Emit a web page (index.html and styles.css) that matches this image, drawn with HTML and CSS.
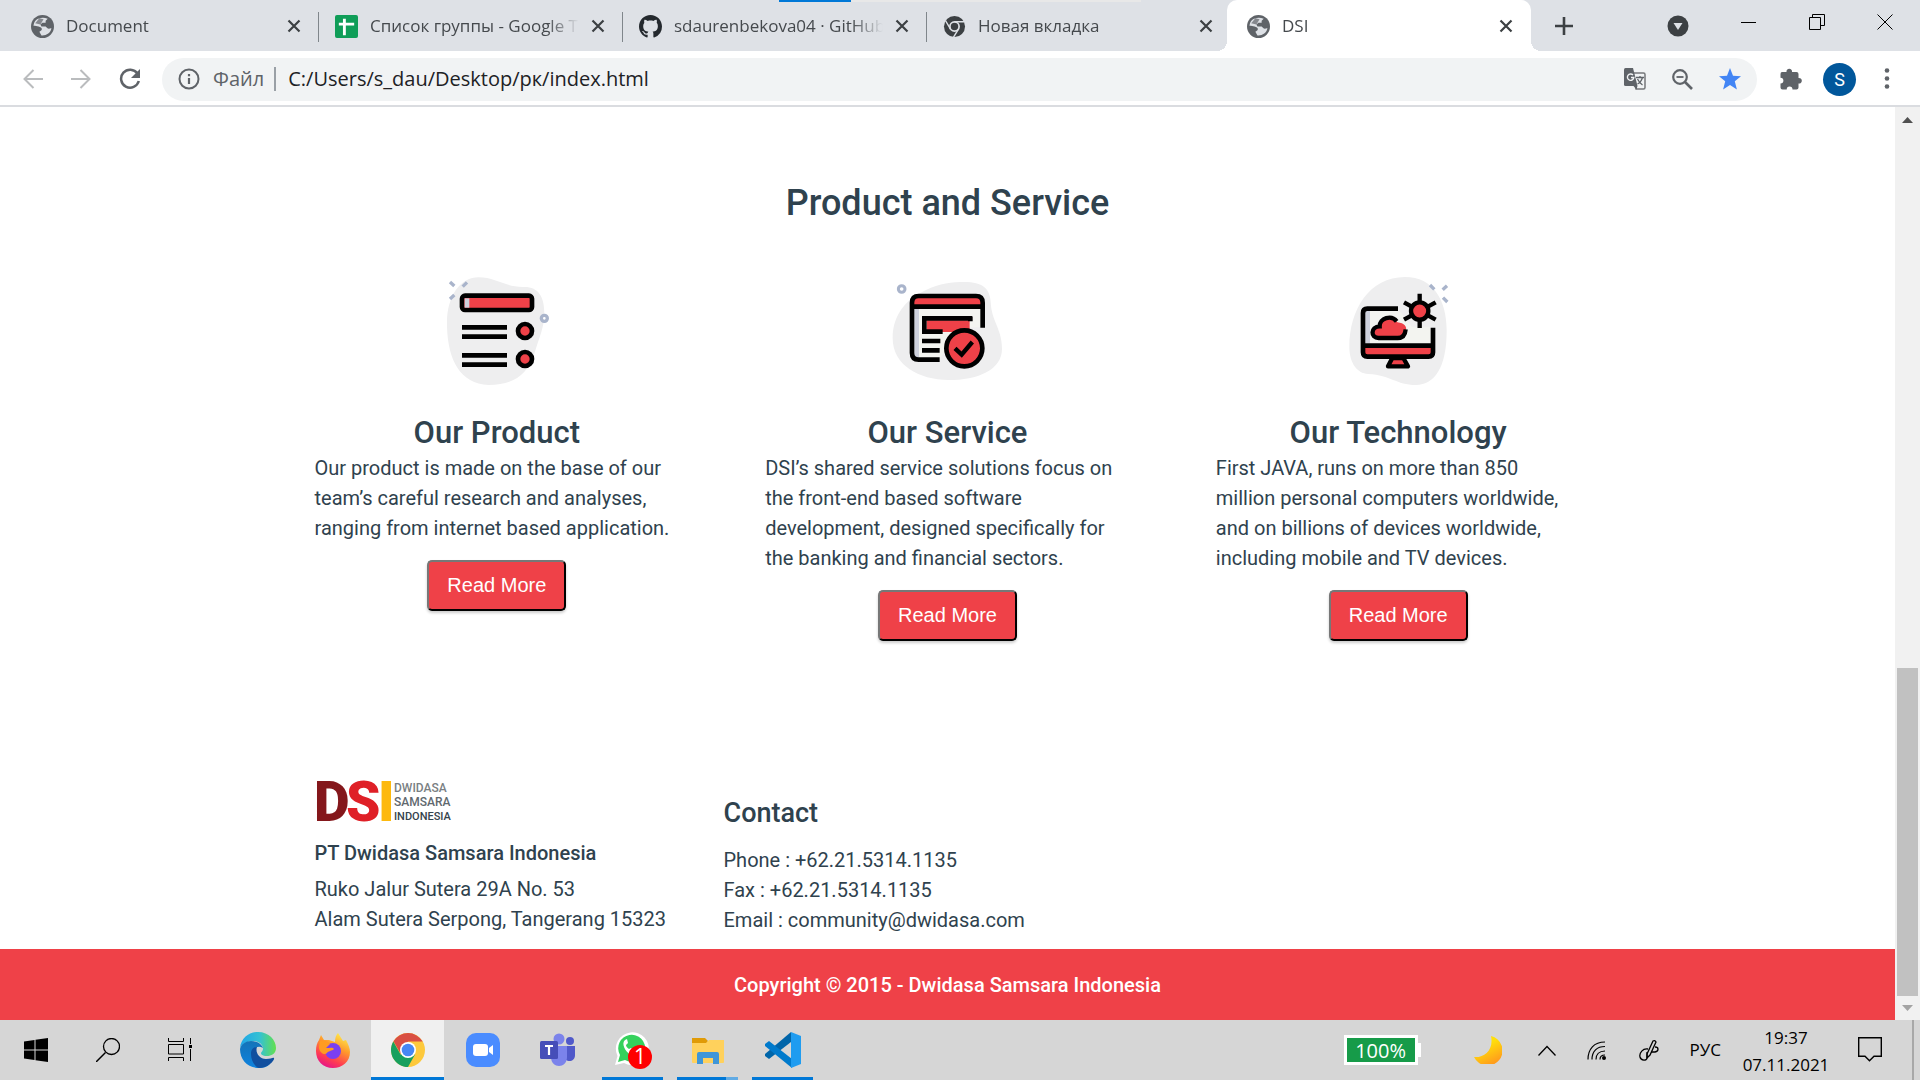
FILE: index.html
```html
<!DOCTYPE html>
<html lang="en">
<head>
<meta charset="utf-8">
<title>DSI</title>
<link rel="stylesheet" href="styles.css">
</head>
<body>
<svg class="defs" aria-hidden="true">
  <symbol id="globe" viewBox="0 0 22 22"><circle cx="11" cy="11" r="11" fill="#5f6368"/><path d="M2.500 10.500c2-.5 4 .5 6 1 1.500.5 2.500 2 1.500 3l-2 1.500 2 3.500c4 .5 9-2 9.500-7-1.500.5-3 1-4 0l-1.500-1.500h-4l-1-2 2-1.500h3V5.500l2-2C8 1 2.500 5 2.500 10.500z" fill="#dee1e6"/><path d="M4 8l5 1 3-5-4-1z" fill="#5f6368" opacity=".7"/></symbol>
  <symbol id="close" viewBox="0 0 14 14"><path d="M1.500 1.500l11 11M12.500 1.500l-11 11" stroke="#3c4043" stroke-width="2.200" fill="none"/></symbol>
</svg>

<header class="browser">
  <div class="progress" aria-hidden="true"></div>
  <div class="tabstrip">
    <div class="tab"><svg class="fav"><use href="#globe"/></svg><span class="tab-title">Document</span><button class="tab-close" aria-label="Close"><svg><use href="#close"/></svg></button></div>
    <div class="tab"><svg class="fav" viewBox="0 0 24 24"><rect width="24" height="24" rx="2" fill="#0f9d58"/><path d="M4 9.500h16M9.800 4v17" stroke="#fff" stroke-width="3"/></svg><span class="tab-title">Список группы - Google Т</span><button class="tab-close" aria-label="Close"><svg><use href="#close"/></svg></button></div>
    <div class="tab"><svg class="fav" viewBox="0 0 16 16"><path fill="#24292e" d="M8 0C3.580 0 0 3.580 0 8c0 3.540 2.290 6.530 5.470 7.590.4.070.55-.17.55-.38 0-.19-.01-.82-.01-1.490-2.010.37-2.530-.49-2.690-.94-.09-.23-.48-.94-.82-1.130-.28-.15-.68-.52-.01-.53.63-.01 1.080.58 1.230.82.72 1.210 1.870.87 2.330.66.070-.52.280-.87.510-1.070-1.780-.2-3.640-.89-3.640-3.950 0-.87.310-1.590.82-2.150-.08-.2-.36-1.020.08-2.120 0 0 .67-.21 2.200.82.64-.18 1.320-.27 2-.27s1.360.09 2 .27c1.530-1.040 2.200-.82 2.200-.82.44 1.100.16 1.920.08 2.120.51.560.82 1.270.82 2.150 0 3.070-1.870 3.750-3.650 3.950.29.250.54.730.54 1.480 0 1.070-.01 1.930-.01 2.200 0 .21.150.46.550.38A8.010 8.010 0 0 0 16 8c0-4.420-3.580-8-8-8z"/></svg><span class="tab-title">sdaurenbekova04 · GitHub</span><button class="tab-close" aria-label="Close"><svg><use href="#close"/></svg></button></div>
    <div class="tab last"><svg class="fav" viewBox="0 0 24 24"><circle cx="12" cy="12" r="11" fill="#3c4043"/><circle cx="12" cy="12" r="4.800" fill="none" stroke="#dee1e6" stroke-width="1.800"/><path d="M12 7h10M7.700 14.500L2.700 6M16.300 14.500L11 23" stroke="#dee1e6" stroke-width="1.500"/></svg><span class="tab-title">Новая вкладка</span><button class="tab-close" aria-label="Close"><svg><use href="#close"/></svg></button></div>
    <div class="tab active"><svg class="fav"><use href="#globe"/></svg><span class="tab-title">DSI</span><button class="tab-close" aria-label="Close"><svg><use href="#close"/></svg></button></div>
    <button class="new-tab" aria-label="New tab"><svg width="18" height="18" viewBox="0 0 18 18"><path d="M9 0v18M0 9h18" stroke="#3c4043" stroke-width="2.600"/></svg></button>
    <div class="window-controls">
      <button aria-label="Search tabs"><svg width="22" height="22" viewBox="0 0 22 22"><circle cx="11" cy="11" r="10.500" fill="#3c4043"/><path d="M6.500 8h9L11 15z" fill="#dee1e6"/></svg></button>
      <button class="raised" aria-label="Minimize"><svg width="16" height="16" viewBox="0 0 16 16"><path d="M0 8.500h15" stroke="#000"/></svg></button>
      <button class="raised" aria-label="Restore"><svg width="16" height="16" viewBox="0 0 16 16"><path d="M.5 3.500h11v12H.5zM3.500 3V.5h12v11H12" fill="none" stroke="#000"/></svg></button>
      <button class="raised" aria-label="Close window"><svg width="16" height="16" viewBox="0 0 16 16"><path d="M.5.5l15 15M15.500.5l-15 15" stroke="#000"/></svg></button>
    </div>
  </div>
  <div class="toolbar">
    <div class="nav">
      <button aria-label="Back"><svg width="20" height="20" viewBox="0 0 20 20"><path d="M20 10H2M10.500 1L1.500 10l9 9" fill="none" stroke="#babcbe" stroke-width="2"/></svg></button>
      <button aria-label="Forward"><svg width="20" height="20" viewBox="0 0 20 20"><path d="M0 10h18M9.500 1l9 9-9 9" fill="none" stroke="#babcbe" stroke-width="2"/></svg></button>
      <button aria-label="Reload"><svg width="22" height="22" viewBox="0 0 22 22"><path d="M18.500 5.500A9 9 0 1 0 19.800 13" fill="none" stroke="#5f6368" stroke-width="2.500"/><path d="M21 1v9h-9z" fill="#5f6368"/></svg></button>
    </div>
    <div class="omnibox">
      <svg width="22" height="22" viewBox="0 0 22 22"><circle cx="11" cy="11" r="9.500" fill="none" stroke="#5f6368" stroke-width="2"/><path d="M11 10v6M11 6v2.200" stroke="#5f6368" stroke-width="2.200"/></svg>
      <label class="scheme" for="address">Файл</label>
      <input id="address" class="address" type="text" value="C:/Users/s_dau/Desktop/рк/index.html">
      <button aria-label="Translate"><svg width="22" height="22" viewBox="0 0 22 22"><path d="M9 5h10.500q1.500 0 1.500 1.500v13q0 1.500-1.500 1.500H12z" fill="#f1f3f4" stroke="#757779" stroke-width="1.500"/><path d="M1.500 0H9l4.500 18h-12Q0 18 0 16.500v-15Q0 0 1.500 0z" fill="#5f6368"/><path d="M9 7a3.200 3.200 0 1 0 .8 2.500H7" fill="none" stroke="#f1f3f4" stroke-width="1.400"/><path d="M12 9.500h8M16 8v1.500M18.500 9.500q-1.500 5-5 6.500M13.500 11q2 4 5 6" fill="none" stroke="#5f6368" stroke-width="1.300"/><path d="M9.500 18l3 3.500 1-3.500z" fill="#5f6368"/></svg></button>
      <button aria-label="Zoom"><svg width="21" height="21" viewBox="0 0 21 21"><circle cx="8" cy="8" r="6.800" fill="none" stroke="#5f6368" stroke-width="2.200"/><path d="M13 13l7 7" stroke="#5f6368" stroke-width="2.600"/><path d="M4.500 8h7" stroke="#5f6368" stroke-width="1.800"/></svg></button>
      <button aria-label="Bookmark"><svg width="22" height="22" viewBox="0 0 22 22"><path d="M11 0l3 7.700 8 .5-6.200 5 2.100 8.300L11 17l-6.900 4.500 2.100-8.300L0 8.200l8-.5z" fill="#4285f4"/></svg></button>
    </div>
    <div class="tools">
      <button aria-label="Extensions"><svg width="22" height="22" viewBox="0 0 22 22"><path d="M2 4h4.500a2.800 2.800 0 1 1 5.500 0h4.500q2 0 2 2v4a2.800 2.800 0 1 1 0 5.500v4q0 2-2 2h-4a2.900 2.900 0 0 0-5.800 0H2.500q-2 0-2-2v-4a2.900 2.900 0 0 0 0-5.800V6q0-2 1.500-2z" fill="#5f6368"/></svg></button>
      <button class="avatar">S</button>
      <button aria-label="Menu"><svg width="6" height="22" viewBox="0 0 6 22"><g fill="#5f6368"><circle cx="3" cy="2.500" r="2.300"/><circle cx="3" cy="10.500" r="2.300"/><circle cx="3" cy="18.500" r="2.300"/></g></svg></button>
    </div>
  </div>
</header>

<div class="viewport">
  <div class="page">
    <main class="container">
      <h2>Product and Service</h2>
      <div class="cards">
        <article class="card">
          <svg class="art" viewBox="51 30 360 360" role="img" aria-label="Product">
            <path d="M81 200C78 110 120 52 176 52c50 0 80 30 135 29 45-1 62 30 62 80 0 40-15 70-30 120-20 60-60 94-137 94C120 370 84 300 81 200z" fill="#eeeeef"/>
            <g stroke="#a9b4cb" stroke-width="10"><path d="M90 66l13 12M141 67l-13 13M103 105l-13 12"/><circle cx="373" cy="175" r="9" fill="#fff"/></g>
            <rect x="126" y="107" width="210" height="43" rx="9" fill="#ef4148" stroke="#000" stroke-width="14"/><path d="M134 115h14v28h-14z" fill="#cdd0dc"/>
            <path d="M126 202h135M126 230h135M126 286h135M126 314h135" stroke="#000" stroke-width="14"/>
            <g fill="#ef4148" stroke="#000" stroke-width="14"><circle cx="315" cy="213" r="21"/><circle cx="315" cy="297" r="21"/></g>
          </svg>
          <h3>Our Product</h3>
          <p>Our product is made on the base of our team’s careful research and analyses, ranging from internet based application.</p>
          <button class="more">Read More</button>
        </article>
        <article class="card">
          <svg class="art" viewBox="52 30 360 360" role="img" aria-label="Service">
            <path d="M69 235c0-75 45-120 100-145 40-20 80-24 115-24 55 0 77 20 79 60 3 60 34 80 34 140 0 65-75 94-160 94-90 0-168-45-168-125z" fill="#eeeeef"/>
            <circle cx="96" cy="87" r="10" fill="#fff" stroke="#a9b4cb" stroke-width="9"/>
            <path d="M127 140h212v60l-60 5-70 93h-65q-17 0-17-17z" fill="#f3f4f0"/><path d="M134 147h14v145h-14z" fill="#cdd0dc"/>
            <path d="M127 140v-13q0-20 20-20h172q20 0 20 20v13z" fill="#ef4148"/>
            <path d="M339 203v-75q0-20-20-20H147q-20 0-20 20v151q0 20 20 20h63M127 140h212" fill="none" stroke="#000" stroke-width="14"/>
            <path d="M171 181h129v35H171z" fill="#ef4148"/><path d="M308 175H164v40h55M302 170v14M157 243h55M157 271h53" fill="none" stroke="#000" stroke-width="14"/>
            <circle cx="284" cy="265" r="54" fill="#ef4148" stroke="#000" stroke-width="14"/><path d="M256 265l20 19 32-38" fill="none" stroke="#000" stroke-width="13"/>
          </svg>
          <h3>Our Service</h3>
          <p>DSI’s shared service solutions focus on the front-end based software development, designed specifically for the banking and financial sectors.</p>
          <button class="more">Read More</button>
        </article>
        <article class="card">
          <svg class="art" viewBox="54 30 360 360" role="img" aria-label="Technology">
            <path d="M88 260c0-110 60-209 167-209 85 0 125 70 125 160 0 110-35 164-92 164-60 0-75-30-143-33-35-2-57-35-57-82z" fill="#eeeeef"/>
            <g stroke="#a9b4cb" stroke-width="10"><path d="M330 75l13 13M381 77l-13 12M369 113l13 13"/></g>
            <path d="M136 150h100l40 50h56v50H136z" fill="#f3f4f0"/><path d="M136 150h14v100h-14z" fill="#cdd0dc"/>
            <path d="M130 257h208v33H130z" fill="#ef4148"/>
            <path d="M234 146h-92q-13 0-13 13v118q0 13 13 13h184q13 0 13-13v-74M129 257h210" fill="none" stroke="#000" stroke-width="14"/>
            <path d="M217 294h33l14 25h-60z" fill="#ef4148" stroke="#000" stroke-width="13" stroke-linejoin="round"/>
            <path d="M177 234c-25 0-26-36 3-37 3-30 42-34 52-10 22 2 29 15 26 23-2 17-9 24-23 24z" fill="#ef4148"/>
            <path d="M230 184c-15-20-52-10-51 15-28 1-28 35-3 35h57q22 0 24-26" fill="none" stroke="#000" stroke-width="13"/>
            <path d="M299 101v103M252 127l95 52M347 127l-95 52" stroke="#000" stroke-width="13"/><circle cx="299" cy="153" r="26" fill="#ef4148" stroke="#000" stroke-width="13"/>
          </svg>
          <h3>Our Technology</h3>
          <p>First JAVA, runs on more than 850 million personal computers worldwide, and on billions of devices worldwide, including mobile and TV devices.</p>
          <button class="more">Read More</button>
        </article>
      </div>
    </main>
    <footer>
      <div class="container about">
        <section>
          <svg class="logo" width="140" height="42" viewBox="0 0 140 42">
            <g font-size="55" font-weight="900"><text x="-1" y="41" fill="#84171b">D</text><text x="31" y="41" fill="#df2027">S</text><text x="63" y="41" fill="#fdb90e">I</text></g>
            <g font-weight="500"><text x="79" y="12" font-size="12" fill="#7a7f83">DWIDASA</text><text x="79" y="26" font-size="12" fill="#5f686e">SAMSARA</text><text x="79" y="40" font-size="11" fill="#35434c">INDONESIA</text></g>
          </svg>
          <h5>PT Dwidasa Samsara Indonesia</h5>
          <p>Ruko Jalur Sutera 29A No. 53<br>Alam Sutera Serpong, Tangerang 15323</p>
        </section>
        <section class="contact">
          <h4>Contact</h4>
          <p>Phone : +62.21.5314.1135<br>Fax : +62.21.5314.1135<br>Email : community@dwidasa.com</p>
        </section>
      </div>
      <div class="copyright">Copyright © 2015 - Dwidasa Samsara Indonesia</div>
    </footer>
  </div>
  <div class="scrollbar" aria-hidden="true">
    <svg width="11" height="6" viewBox="0 0 11 6"><path d="M0 6L5.500 0 11 6z" fill="#505050"/></svg>
    <div class="track"><div class="thumb"></div></div>
    <svg width="11" height="6" viewBox="0 0 11 6"><path d="M0 0l5.500 6L11 0z" fill="#a3a3a3"/></svg>
  </div>
</div>

<div class="taskbar">
  <div class="system">
    <button aria-label="Start"><svg width="24" height="24" viewBox="0 0 24 24"><path d="M0 3.500l10.500-1.500v9.500H0zM11.500 1.800L24 0v11.500H11.500zM0 12.500h10.500V22L0 20.500zM11.500 12.500H24V24l-12.500-1.800z"/></svg></button>
    <button aria-label="Search"><svg width="24" height="24" viewBox="0 0 24 24"><circle cx="15.500" cy="8.500" r="8" fill="none" stroke="#000" stroke-width="1.300"/><path d="M9.500 14.500L0 24" stroke="#000" stroke-width="1.500"/></svg></button>
    <button aria-label="Task view"><svg width="24" height="24" viewBox="0 0 24 24"><path d="M.5 0v3.500h15V0M.5 6.500h15v9.500H.5zM.5 23v-3.500h15V23M22.500 0v6M22.500 11v12" fill="none" stroke="#000"/><path d="M21 7h3v3h-3z"/></svg></button>
  </div>
  <div class="apps">
    <button aria-label="Edge"><svg width="36" height="36" viewBox="0 0 36 36"><defs><linearGradient id="e1"><stop offset="0" stop-color="#1fa5e8"/><stop offset=".55" stop-color="#35c1d2"/><stop offset="1" stop-color="#63e04e"/></linearGradient><linearGradient id="e2" x2="0" y2="1"><stop offset="0" stop-color="#1473b8"/><stop offset="1" stop-color="#0f83df"/></linearGradient></defs><path d="M0 16C1 6 9 0 18 0c11 0 18 8 18 16 0 6-5 8-9 8-5 0-6-2-6-3s2-2 2-4c0-5-5-8-10-8C7 9 2 12 0 16z" fill="url(#e1)"/><path d="M0 17c1-5 6-8 11-8 7 0 11 4 12 7-6-4-12 2-9 8 3 8 10 10 16 8-3 3-7 4-11 4C8 36 0 28 0 17z" fill="url(#e2)"/><path d="M11 22c0-4 2-7 6-7-2 5 2 12 9 12 5 0 7-2 8-1 1 2-6 10-15 10-5-2-8-8-8-14z" fill="#114f9f"/></svg></button>
    <button aria-label="Firefox"><svg width="34" height="35" viewBox="0 0 34 35"><defs><linearGradient id="f1" x1=".8" y1="0" x2=".3" y2="1"><stop offset="0" stop-color="#fff44f"/><stop offset=".4" stop-color="#ff9a2b"/><stop offset=".75" stop-color="#ff3b52"/><stop offset="1" stop-color="#e4138b"/></linearGradient></defs><path d="M3 7l2-5 3 5 5 0 6 2c0-4 1-7 3-9l5 8 3-1c2 4 4 8 4 12 0 10-8 16-17 16C7 35 0 28 0 18 0 13 1 10 3 7z" fill="url(#f1)"/><circle cx="17" cy="18" r="8" fill="#7b3ff2"/><path d="M4 8c5-1 8 1 10 3l-4 4c4 0 7-1 8 1-2 2-6 2-7 4-3 3-8-1-8-6z" fill="#ff9b22"/></svg></button>
    <button class="current open" aria-label="Chrome"><svg width="34" height="34" viewBox="0 0 34 34"><circle cx="17" cy="17" r="17" fill="#fdc93c"/><path d="M2.500 8.300A17 17 0 0 1 31.700 8.500H17L9.800 21z" fill="#d94f43"/><path d="M2.300 8.500A17 17 0 0 0 17 34l7-12.500H9.600z" fill="#18a05e"/><circle cx="17" cy="17" r="8" fill="#fff"/><circle cx="17" cy="17" r="6.300" fill="#4687f4"/></svg></button>
    <button aria-label="Zoom"><svg width="34" height="34" viewBox="0 0 34 34"><rect width="34" height="34" rx="10" fill="#4a8cff"/><rect x="7" y="11" width="15" height="12" rx="3" fill="#fff"/><path d="M23 15l4-3v10l-4-3z" fill="#fff"/></svg></button>
    <button aria-label="Teams"><svg width="36" height="34" viewBox="0 0 36 34"><circle cx="19" cy="6" r="5.500" fill="#7b83eb"/><circle cx="30" cy="8" r="4" fill="#5059c9"/><path d="M24 13h11v9c0 8-11 8-11 0z" fill="#5059c9"/><path d="M11 13h16v11c0 12-16 12-16 0z" fill="#7b83eb"/><rect y="8" width="18" height="18" rx="1.500" fill="#464eb8"/><path d="M5 13h8M9 13v9" stroke="#fff" stroke-width="2.200"/></svg></button>
    <button class="open" aria-label="WhatsApp"><svg width="38" height="38" viewBox="0 0 38 38"><path d="M1 34l2.500-9A16.500 16.500 0 1 1 10 32z" fill="#fff"/><path d="M4 31l2-7a13.500 13.500 0 1 1 5 5z" fill="#35d15c"/><path d="M11 9c-4 3 0 12 6 15l4-4-4-3-2 1c-2-1-3-3-3-4l2-2-1-4z" fill="#fff"/><circle cx="26" cy="26" r="12" fill="#f00"/><text class="badge" x="26" y="33" text-anchor="middle" fill="#fff">1</text></svg></button>
    <button class="open multi" aria-label="Explorer"><svg width="32" height="27" viewBox="0 0 32 27"><path d="M0 1h13l3 3-3 4H0z" fill="#e09b07"/><path d="M0 6h14l3-3h15v22q0 1-1 1H1q-1 0-1-1z" fill="#ffd15c"/><path d="M5 27V17q0-2 2-2h18q2 0 2 2v10h-6v-6H11v6z" fill="#3f96d8"/></svg></button>
    <button class="open" aria-label="Visual Studio Code"><svg width="36" height="36" viewBox="0 0 36 36"><path d="M26 0v10L4 27l-4-3v-2z" fill="#0065a9"/><path d="M0 12l4-3 23 18v9L0 14z" fill="#007acc"/><path d="M26 0l10 4v28l-10 4z" fill="#1f9cf0"/></svg></button>
  </div>
  <div class="tray">
    <div class="battery">100%</div>
    <svg class="moon" width="28" height="28" viewBox="0 0 28 28"><defs><linearGradient id="m" x2=".5" y2="1"><stop offset=".4" stop-color="#ffdf0a"/><stop offset="1" stop-color="#ff9d1c"/></linearGradient></defs><path d="M17 0a15 15 0 1 1-17 21C10 22 20 14 17 0z" fill="url(#m)"/></svg>
    <svg class="caret" width="18" height="11" viewBox="0 0 18 11"><path d="M.5 10.500L9 1.500l8.500 9" fill="none" stroke="#000" stroke-width="1.300"/></svg>
    <svg class="wifi" width="19" height="19" viewBox="0 0 19 19"><g fill="none" stroke="#000" stroke-width="1.200"><path d="M1 18.500C1 8 7 1 18 1M5 18.500C5 10 10 5.500 18 5.500M9 18.500c0-5 3-8.500 9-8.500M13 18.500c0-3 2-4.500 5-4.500"/></g><circle cx="17" cy="17" r="2"/></svg>
    <svg class="pen" width="20" height="21" viewBox="0 0 20 21"><g fill="none" stroke="#000" stroke-width="1.300"><path d="M8 14L14 1q2-1 3 1l-6 13-3 3z"/><path d="M9 9c-5-1-9 4-8 8 1 4 7 4 7 1v-6M16 7c4 0 4 4 0 5h-4"/></g></svg>
    <span class="lang">РУС</span>
    <div class="clock"><span>19:37</span><span>07.11.2021</span></div>
    <svg class="notes" width="24" height="26" viewBox="0 0 24 26"><path d="M.7.7h22.600v18.600H16l-4.500 4.500L7 19.300H.7z" fill="none" stroke="#000" stroke-width="1.400"/></svg>
  </div>
</div>
</body>
</html>
```
FILE: styles.css
```css
* { box-sizing: border-box; }
body {
  margin: 0;
  min-height: 100vh;
  display: flex;
  flex-direction: column;
  background: #fff;
  color: #2f424e;
  font: 20px/30px Roboto, sans-serif;
}
h2, h3, h4, h5, p { margin: 0; font-weight: 500; }
p { font-weight: 400; }
button { font: inherit; border: 0; padding: 0; background: none; cursor: pointer; }
svg { display: block; flex: none; }
.defs { position: absolute; width: 0; height: 0; }

/* Browser frame */
.browser { position: relative; font-family: "Open Sans", sans-serif; border-bottom: 2px solid #dadce0; }
.progress {
  position: absolute;
  top: 0;
  left: 779px;
  width: 362px;
  height: 2px;
  background: linear-gradient(to right, #0078d7 72px, #e8e8e8 72px);
}
.tabstrip { display: flex; align-items: center; height: 51px; padding-left: 15px; background: #dee1e6; }
.tab {
  position: relative;
  display: flex;
  align-items: center;
  gap: 12px;
  flex: 0 1 304px;
  min-width: 0;
  height: 51px;
  padding: 1px 18px 0 16px;
}
.tab:not(.last):not(.active)::after {
  content: "";
  position: absolute;
  right: 0;
  top: 12px;
  width: 1px;
  height: 30px;
  background: #80868b;
}
.fav { width: 23px; height: 23px; }
.tab-title {
  flex: 1;
  overflow: hidden;
  white-space: nowrap;
  font-size: 17px;
  line-height: 24px;
  color: #45494d;
  mask-image: linear-gradient(to right, #000 calc(100% - 32px), transparent);
}
.tab-close { display: flex; }
.tab-close svg { width: 14px; height: 14px; }
.tab.active { margin-left: -4px; padding-left: 20px; background: #fff; border-radius: 10px 10px 0 0; }
.tab.active::before {
  content: "";
  position: absolute;
  left: -10px;
  right: -10px;
  bottom: 0;
  height: 10px;
  background:
    radial-gradient(circle at 0 0, transparent 10px, #fff 10px) left / 10px 10px no-repeat,
    radial-gradient(circle at 100% 0, transparent 10px, #fff 10px) right / 10px 10px no-repeat;
}
.new-tab { margin-left: 24px; }
.window-controls { display: flex; align-items: center; gap: 52px; margin-left: auto; padding-right: 27px; }
.window-controls .raised { padding-bottom: 8px; }
.toolbar { display: flex; align-items: center; height: 54px; padding: 2px 30px 0 23px; gap: 21px; }
.nav { display: flex; align-items: center; gap: 28px; }
.omnibox {
  display: flex;
  align-items: center;
  flex: 1;
  gap: 26px;
  height: 43px;
  padding: 0 16px;
  border-radius: 22px;
  background: #f1f3f4;
}
.scheme { margin-left: -13px; padding-right: 10px; border-right: 2px solid #9aa0a6; color: #5f6368; line-height: 24px; }
.address {
  flex: 1;
  min-width: 0;
  margin-left: -14px;
  padding: 0;
  border: 0;
  background: none;
  color: #202124;
  font: inherit;
}
.tools { display: flex; align-items: center; gap: 28px; padding-left: 2px; }
.avatar { width: 33px; height: 33px; margin-left: -7px; border-radius: 50%; background: #01579b; color: #fff; font: 18px/33px Roboto, sans-serif; }

/* Page */
.viewport { display: flex; flex: 1; }
.page { flex: 1; display: flex; flex-direction: column; }
.container { width: 100%; max-width: 1266px; margin: 0 auto; }
main { padding-top: 74px; }
h2 { font-size: 36px; line-height: 44px; text-align: center; }
.cards { display: grid; grid-template-columns: repeat(3, 1fr); gap: 86px; padding-top: 45px; align-items: start; }
.card { display: flex; flex-direction: column; align-items: center; }
.art { width: 120px; height: 120px; }
h3 { margin-top: 23px; font-size: 31px; line-height: 40px; }
.card p { width: 100%; }
.more {
  margin-top: 17px;
  padding: 8px 18px;
  border: 2px outset #222;
  border-color: #777 #222 #222 #777;
  border-radius: 5px;
  background: #ef4148;
  color: #fff;
  font: 20px/31px "Liberation Sans", sans-serif;
  box-shadow: 0 2px 3px rgba(0, 0, 0, .2);
}
footer { margin-top: auto; }
.about { display: grid; grid-template-columns: 365px 1fr; gap: 44px; padding-bottom: 14px; }
.logo { overflow: visible; }
.logo text { font-family: Roboto, sans-serif; }
h5 { margin-top: 16px; font-size: 20px; line-height: 30px; }
h5 + p { margin-top: 6px; }
.contact { padding-top: 17px; }
h4 { margin-bottom: 16px; font-size: 27px; line-height: 32px; }
.copyright { padding: 21px 0 20px; background: #ef4148; color: #fff; font-weight: 500; text-align: center; }

.scrollbar { display: flex; flex-direction: column; align-items: center; width: 25px; padding: 10px 0 9px; background: #f1f1f1; }
.track { flex: 1; display: flex; flex-direction: column; justify-content: flex-end; padding: 9px 0; }
.thumb { width: 21px; height: 38%; background: #c1c1c1; }

/* Taskbar */
.taskbar { display: flex; justify-content: space-between; height: 60px; background: #d6d6d6; color: #000; font-family: "Open Sans", sans-serif; }
.taskbar button { display: flex; align-items: center; justify-content: center; height: 60px; }
.system { display: flex; }
.system button { width: 72px; }
.apps { display: flex; margin: 0 auto 0 4px; }
.apps button { width: 75px; border: 0 solid transparent; border-width: 0 1px; background-clip: padding-box; }
.apps .open { background: linear-gradient(#0078d7, #0078d7) center bottom / 61px 3px no-repeat; }
.apps .current { background: linear-gradient(#0078d7, #0078d7) bottom / 100% 3px no-repeat padding-box, #f0f0f0 padding-box; }
.apps .multi { background: linear-gradient(to right, #0078d7 49px, #62abe4 49px) center bottom / 61px 3px no-repeat; }
.badge { font: 21px "Open Sans", sans-serif; }
.tray { display: flex; align-items: center; padding-right: 6px; margin-right: 6px; border-right: 2px solid #a8a8a8; }
.battery { position: relative; width: 74px; height: 30px; border: 3px solid #fff; background: #169b49; color: #fff; font-size: 20px; line-height: 25px; text-align: center; }
.battery::after { content: ""; position: absolute; right: -6px; top: 5px; width: 3px; height: 14px; background: #fff; }
.moon { margin-left: 56px; }
.caret { margin-left: 36px; }
.wifi { margin-left: 31px; }
.pen { margin-left: 33px; }
.lang { margin-left: 31px; font-size: 17px; }
.clock { display: flex; flex-direction: column; width: 110px; margin-left: 10px; padding-top: 1px; font-size: 17px; line-height: 27px; text-align: center; }
.notes { margin: 0 24px 0 17px; }
```
